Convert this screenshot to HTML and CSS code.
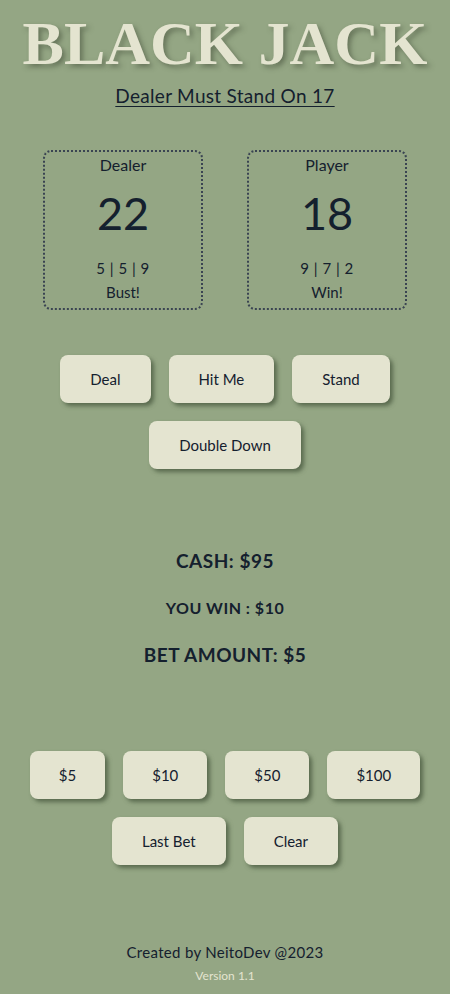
FILE: index.html
```html
<!DOCTYPE html>
<html>
<head>
<meta charset="utf-8">
<link rel="stylesheet" href="styles.css">
</head>
<body>
<main class="app">
  <h1 class="title">BLACK JACK</h1>
  <p class="rule">Dealer Must Stand On 17</p>
  <section class="hands">
    <div class="hand">
      <div class="hand-name">Dealer</div>
      <div class="hand-total">22</div>
      <div class="hand-cards">5 | 5 | 9</div>
      <div class="hand-result">Bust!</div>
    </div>
    <div class="hand">
      <div class="hand-name">Player</div>
      <div class="hand-total">18</div>
      <div class="hand-cards">9 | 7 | 2</div>
      <div class="hand-result">Win!</div>
    </div>
  </section>
  <section class="actions">
    <div class="btn-row">
      <button class="btn">Deal</button>
      <button class="btn">Hit Me</button>
      <button class="btn">Stand</button>
    </div>
    <div class="btn-row">
      <button class="btn">Double Down</button>
    </div>
  </section>
  <section class="stats">
    <div class="stat big">CASH: $95</div>
    <div class="stat small">YOU WIN : $10</div>
    <div class="stat big">BET AMOUNT: $5</div>
  </section>
  <section class="bets">
    <div class="btn-row">
      <button class="btn chip">$5</button>
      <button class="btn chip">$10</button>
      <button class="btn chip">$50</button>
      <button class="btn chip">$100</button>
    </div>
    <div class="btn-row">
      <button class="btn">Last Bet</button>
      <button class="btn">Clear</button>
    </div>
  </section>
  <footer class="footer">
    <div class="credit">Created by NeitoDev @2023</div>
    <div class="version">Version 1.1</div>
  </footer>
</main>
</body>
</html>
```
FILE: styles.css
```css
* { box-sizing: border-box; }
html, body {
  margin: 0;
  padding: 0;
  background: #94a684;
}
body {
  font-family: "Lato", "Noto Sans", sans-serif;
  color: #14202e;
  width: 450px;
  height: 994px;
  overflow: hidden;
}
.app {
  display: flex;
  flex-direction: column;
  align-items: center;
}
.title {
  margin: 8px 0 0;
  font-family: "Liberation Serif", serif;
  font-weight: 700;
  font-size: 62px;
  line-height: 70px;
  color: #e4e4d0;
  letter-spacing: 0;
  text-shadow: 3px 3px 5px rgba(60, 70, 50, 0.5);
}
.rule {
  margin: 6px 0 0;
  font-size: 19px;
  line-height: 24px;
  text-decoration: underline;
  text-underline-offset: 3px;
  text-decoration-thickness: 1px;
  letter-spacing: 0.3px;
}
.hands {
  display: flex;
  gap: 44px;
  margin-top: 42px;
}
.hand {
  width: 160px;
  height: 160px;
  border: 2px dotted #3a4452;
  border-radius: 8px;
  display: flex;
  flex-direction: column;
  align-items: center;
  padding-top: 3px;
}
.hand-name {
  font-size: 16px;
  line-height: 20px;
}
.hand-total {
  font-size: 45px;
  line-height: 50px;
  margin-top: 13px;
}
.hand-cards {
  margin-top: 20px;
  font-size: 15px;
  line-height: 20px;
  letter-spacing: 0.5px;
}
.hand-result {
  margin-top: 4px;
  font-size: 15px;
  line-height: 20px;
}
.actions {
  margin-top: 45px;
  display: flex;
  flex-direction: column;
  gap: 18px;
  align-items: center;
}
.btn-row {
  display: flex;
  gap: 18px;
  justify-content: center;
}
.btn {
  height: 48px;
  padding: 0 30px;
  border: none;
  border-radius: 8px;
  background: #e4e4d0;
  color: #14202e;
  font-family: "Lato", "Noto Sans", sans-serif;
  font-size: 15px;
  box-shadow: 3px 3px 4px rgba(70, 85, 60, 0.75);
}
.btn.chip {
  padding: 0 29px;
}
.stats {
  margin-top: 80px;
  display: flex;
  flex-direction: column;
  align-items: center;
}
.stat {
  font-weight: 700;
  letter-spacing: 0.5px;
}
.stat.big {
  font-size: 19px;
  line-height: 24px;
}
.stat.small {
  font-size: 16px;
  line-height: 24px;
  margin: 23px 0;
}
.bets {
  margin-top: 84px;
  display: flex;
  flex-direction: column;
  gap: 18px;
  align-items: center;
}
.footer {
  margin-top: 77px;
  display: flex;
  flex-direction: column;
  align-items: center;
}
.credit {
  font-size: 15px;
  line-height: 20px;
  letter-spacing: 0.3px;
}
.version {
  margin-top: 6px;
  font-size: 12px;
  line-height: 16px;
  color: #e4e4d0;
}
```
